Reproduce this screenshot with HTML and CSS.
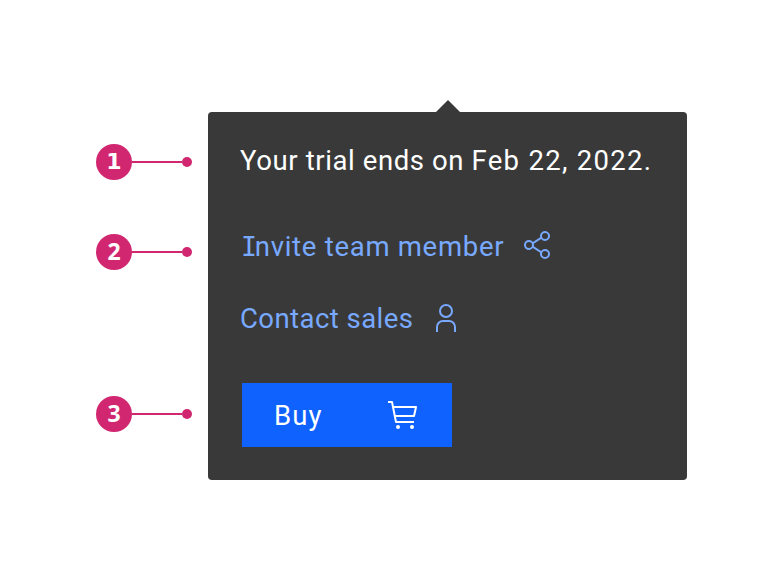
FILE: index.html
```html
<!DOCTYPE html>
<html lang="en">
<head>
<meta charset="utf-8">
<title>Trial popover anatomy</title>
<link rel="stylesheet" href="styles.css">
</head>
<body>
<main class="figure">
  <ol class="markers">
    <li class="marker"><b class="badge badge-first">1</b><i class="line"></i><i class="dot"></i></li>
    <li class="marker marker-links"><b class="badge">2</b><i class="line"></i><i class="dot"></i></li>
    <li class="marker marker-action"><b class="badge">3</b><i class="line"></i><i class="dot"></i></li>
  </ol>
  <section class="panel">
    <svg class="caret" viewBox="0 0 24 12"><path d="M0 12L12 0l12 12z"/></svg>
    <p class="message">Your trial ends on <span class="date">Feb 22, 2022.</span></p>
    <a class="link link-invite"><span class="label"><span class="serif-i">I</span>nvite team member</span>
      <svg class="icon" viewBox="0 0 32 32"><path d="M23 20a5 5 0 0 0-3.89 1.89l-7.31-4.57a4.46 4.46 0 0 0 0-2.64l7.31-4.57A5 5 0 1 0 18 7a4.79 4.79 0 0 0 .2 1.32l-7.31 4.57a5 5 0 1 0 0 6.22l7.31 4.57A4.79 4.79 0 0 0 18 25a5 5 0 1 0 5-5zm0-16a3 3 0 1 1-3 3 3 3 0 0 1 3-3zM7 19a3 3 0 1 1 3-3 3 3 0 0 1-3 3zm16 9a3 3 0 1 1 3-3 3 3 0 0 1-3 3z"/></svg>
    </a>
    <a class="link link-contact"><span class="label">Contact sales</span>
      <svg class="icon" viewBox="0 0 32 32"><path d="M16 4a5 5 0 1 1-5 5 5 5 0 0 1 5-5m0-2a7 7 0 1 0 7 7 7 7 0 0 0-7-7zm10 28h-2v-5a5 5 0 0 0-5-5h-6a5 5 0 0 0-5 5v5H6v-5a7 7 0 0 1 7-7h6a7 7 0 0 1 7 7z"/></svg>
    </a>
    <button class="buy" type="button"><span>Buy</span>
      <svg class="icon" viewBox="0 0 32 32"><circle cx="10" cy="28" r="2"/><circle cx="24" cy="28" r="2"/><path d="M28 7H5.82L5 2.8A1 1 0 0 0 4 2H0v2h3.18L7 23.2a1 1 0 0 0 1 .8h18v-2H8.82L8 18h18a1 1 0 0 0 1-.78l2-9A1 1 0 0 0 28 7zm-2.8 9H7.62l-1.4-7h20.53z"/></svg>
    </button>
  </section>
</main>
</body>
</html>
```

FILE: styles.css
```css
* { box-sizing: border-box; }
body {
  margin: 0;
  background: #fff;
  font-family: Roboto, "Liberation Sans", sans-serif;
}
.figure {
  display: flex;
  align-items: flex-start;
  gap: 16px;
  padding: 112px 0 0 96px;
}
.markers {
  width: 96px;
  margin: 0;
  padding: 32px 0 0;
  list-style: none;
}
.marker { display: flex; align-items: center; height: 36px; }
.marker-links { margin-top: 54px; }
.marker-action { margin-top: 126px; }
.badge {
  width: 36px;
  height: 36px;
  border-radius: 50%;
  background: #d12771;
  color: #fff;
  font: 700 23px/35px "Noto Sans", sans-serif;
  text-align: center;
}
.badge-first { font: 700 22px/36px "DejaVu Sans", sans-serif; }
.line { flex: 1; height: 2px; background: #d12771; }
.dot { width: 10px; height: 10px; border-radius: 50%; background: #d12771; }
.panel {
  position: relative;
  width: 479px;
  height: 368px;
  padding: 32px;
  border-radius: 4px;
  background: #393939;
  color: #fff;
  font-size: 27.5px;
}
.caret {
  position: absolute;
  top: -12px;
  left: 227.5px;
  width: 24px;
  height: 12px;
  fill: #393939;
}
.message {
  margin: 0;
  line-height: 34px;
  letter-spacing: 0.6px;
  white-space: nowrap;
}
.date { letter-spacing: 1.3px; }
.link {
  display: flex;
  align-items: center;
  height: 32px;
  color: #78a9ff;
  white-space: nowrap;
}
.label { line-height: 32px; padding-top: 2px; }
.link-invite { margin-top: 51px; }
.link-invite .label {
  width: 282px;
  padding-top: 4px;
  padding-left: 1px;
  letter-spacing: 0.72px;
}
.link-contact { margin-top: 41px; }
.link-contact .label { width: 190px; letter-spacing: 0.45px; }
.link-invite .serif-i {
  font-family: "DejaVu Sans Mono", monospace;
  font-size: 26.5px;
  line-height: 1;
  letter-spacing: -2.2px;
}
.icon { flex: none; width: 32px; height: 32px; fill: currentColor; }
.buy {
  display: flex;
  align-items: center;
  justify-content: space-between;
  width: 210px;
  height: 64px;
  margin: 49px 0 0 2px;
  padding: 0 32px;
  border: 0;
  background: #0f62fe;
  color: #fff;
  font: inherit;
  letter-spacing: 1.1px;
}
```
